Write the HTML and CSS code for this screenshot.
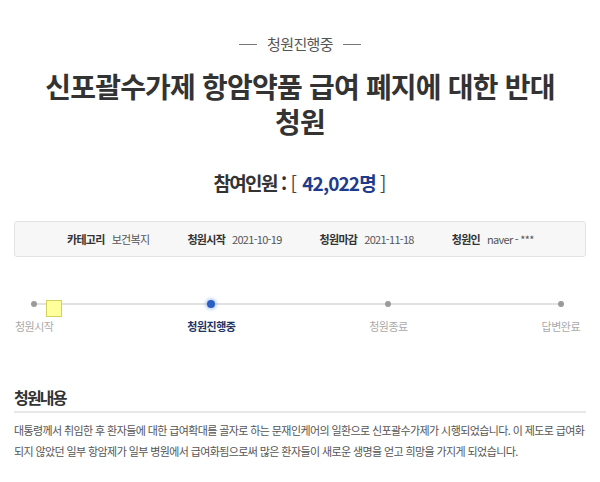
FILE: index.html
```html
<!DOCTYPE html>
<html lang="ko">
<head>
  <meta charset="UTF-8">
  <meta name="viewport" content="width=device-width, initial-scale=1.0">
  <title>신포괄수가제 항암약품 급여 폐지에 대한 반대 청원</title>
  <link rel="stylesheet" href="styles.css">
</head>
<body>
  <div class="container">
    <div class="status">청원진행중</div>
    <h1 class="title">신포괄수가제 항암약품 급여 폐지에 대한 반대<br>청원</h1>
    <div class="count">
      <span class="count-label">참여인원</span>
      <span class="colon">:</span>
      <span class="bracket">[</span>
      <span class="count-num">42,022<span class="count-unit">명</span></span>
      <span class="bracket">]</span>
    </div>

    <ul class="info">
      <li><strong>카테고리</strong><span class="ko">보건복지</span></li>
      <li><strong>청원시작</strong><span class="num">2021-10-19</span></li>
      <li><strong>청원마감</strong><span class="num">2021-11-18</span></li>
      <li><strong>청원인</strong><span class="num">naver - ***</span></li>
    </ul>

    <div class="steps">
      <div class="step"><span class="dot"></span><span class="step-label">청원시작</span></div>
      <div class="step current"><span class="dot"></span><span class="step-label">청원진행중</span></div>
      <div class="step"><span class="dot"></span><span class="step-label">청원종료</span></div>
      <div class="step"><span class="dot"></span><span class="step-label">답변완료</span></div>
      <span class="note"></span>
    </div>

    <h2 class="section-title">청원내용</h2>
    <p class="content">대통령께서 취임한 후 환자들에 대한 급여확대를 골자로 하는 문재인케어의 일환으로 신포괄수가제가 시행되었습니다. 이 제도로 급여화되지 않았던 일부 항암제가 일부 병원에서 급여화됨으로써 많은 환자들이 새로운 생명을 얻고 희망을 가지게 되었습니다.</p>
  </div>
</body>
</html>
```

FILE: styles.css
```css
body {
  margin: 0;
  background: #fff;
  font-family: "Noto Sans CJK KR", "Noto Sans", sans-serif;
  color: #333;
}
.container {
  padding: 0 14px;
}
.status {
  display: flex;
  align-items: center;
  justify-content: center;
  gap: 10px;
  padding-top: 34px;
  height: 20px;
  line-height: 20px;
  font-size: 15px;
  letter-spacing: -0.6px;
  color: #555;
}
.status::before,
.status::after {
  content: "";
  width: 18px;
  height: 1px;
  background: #777;
}
.title {
  margin: 15px 0 0;
  text-align: center;
  font-size: 28px;
  line-height: 35px;
  font-weight: 700;
  letter-spacing: -0.8px;
  color: #333;
}
.count {
  margin-top: 29px;
  height: 30px;
  line-height: 30px;
  text-align: center;
  font-size: 19px;
  font-weight: 700;
  color: #333;
}
.count-label {
  letter-spacing: -1.7px;
}
.colon {
  margin: 0 -2px 0 -1px;
}
.bracket {
  font-weight: 400;
  color: #444;
}
.count-num {
  letter-spacing: -0.9px;
  color: #1f3c8c;
  margin-right: -1px;
}
.count-unit {
  letter-spacing: -1px;
}
.info {
  list-style: none;
  margin: 23px 0 0;
  padding: 0 0 0 52px;
  height: 34px;
  display: flex;
  align-items: center;
  gap: 38px;
  background: #f7f7f7;
  border: 1px solid #e3e3e3;
  border-radius: 3px;
  font-size: 11px;
}
.info li {
  display: flex;
  gap: 7px;
}
.info strong {
  letter-spacing: -0.7px;
  color: #333;
}
.info .ko {
  letter-spacing: -0.7px;
  color: #555;
}
.info .num {
  letter-spacing: -0.7px;
  color: #555;
}
.steps {
  position: relative;
  margin-top: 42px;
  padding: 0 6px 0 1px;
  display: flex;
  justify-content: space-between;
}
.steps::before {
  content: "";
  position: absolute;
  left: 18px;
  right: 24px;
  top: 4px;
  height: 2px;
  background: #e2e2e2;
}
.step {
  position: relative;
  display: flex;
  flex-direction: column;
  align-items: center;
}
.dot {
  width: 6px;
  height: 6px;
  margin: 2px 0;
  border-radius: 50%;
  background: #9a9a9a;
}
.step.current .dot {
  width: 8px;
  height: 8px;
  margin: 1px 0;
  background: #2a5fc4;
  box-shadow: 0 0 3px 2px rgba(90, 140, 230, 0.35);
}
.step-label {
  margin-top: 9px;
  font-size: 11px;
  line-height: 16px;
  letter-spacing: -0.5px;
  color: #aaa;
}
.step.current .step-label {
  font-weight: 700;
  color: #1f3566;
}
.note {
  position: absolute;
  left: 32px;
  top: 1px;
  width: 14px;
  height: 15px;
  background: #ffff9c;
  border: 1px solid #d2d25a;
}
.section-title {
  margin: 52px 0 0;
  padding-bottom: 3px;
  border-bottom: 2px solid #e8e8e8;
  font-size: 16px;
  line-height: 22px;
  letter-spacing: -1.8px;
  font-weight: 700;
  color: #333;
}
.content {
  margin: 7px 0 0;
  font-size: 11px;
  line-height: 21px;
  letter-spacing: -0.6px;
  color: #555;
}
```
